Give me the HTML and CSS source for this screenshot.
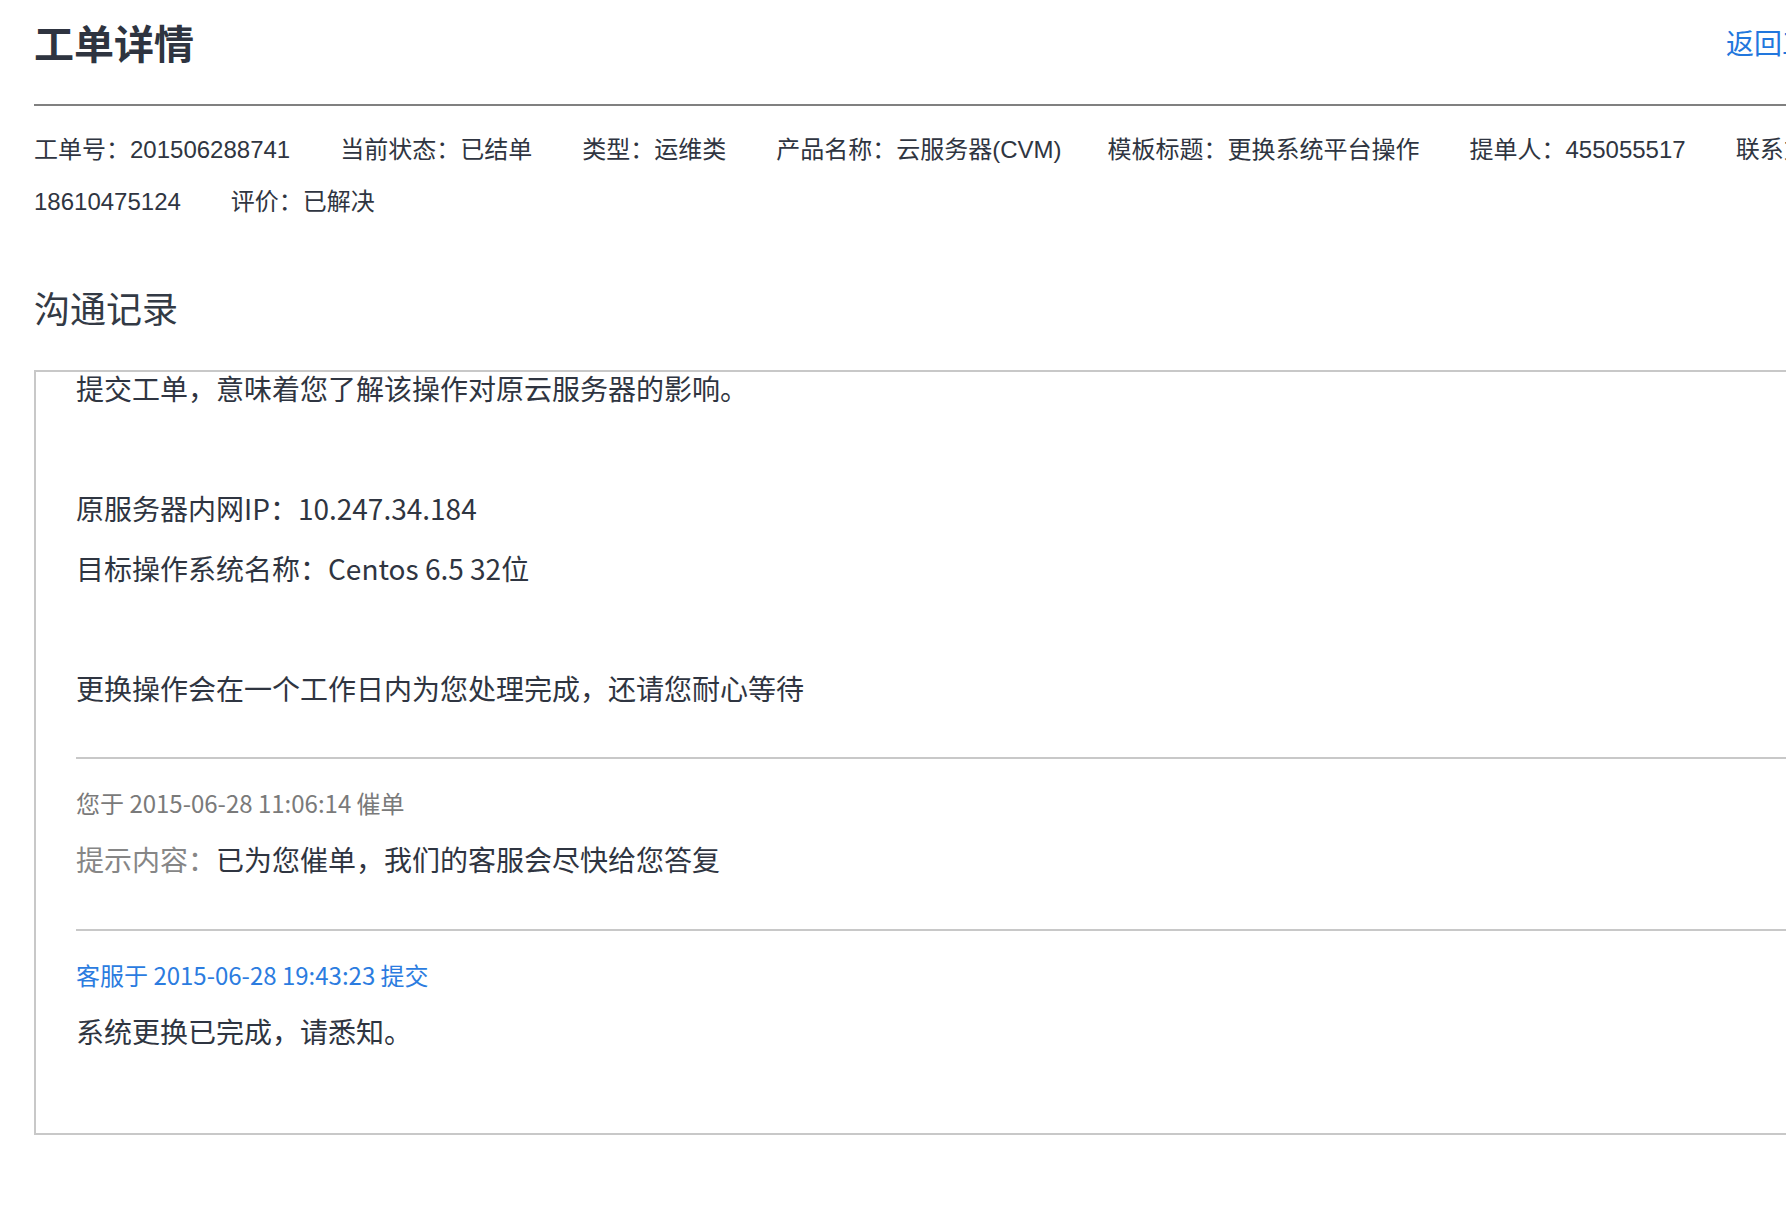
FILE: index.html
```html
<!DOCTYPE html>
<html lang="zh-CN">
<head>
<meta charset="utf-8">
<title>工单详情</title>
<link rel="stylesheet" href="styles.css">
</head>
<body>
<div class="page">
  <header class="page-header">
    <h1 class="page-title">工单详情</h1>
    <a class="back-link" href="#">返回工单列表</a>
  </header>

  <div class="ticket-info"><span class="info-item">工单号：201506288741</span><span class="info-item">当前状态：已结单</span><span class="info-item">类型：运维类</span><span class="info-item info-product">产品名称：云服务器(CVM)</span><span class="info-item">模板标题：更换系统平台操作</span><span class="info-item">提单人：455055517</span><span class="info-item">联系方式：<wbr>18610475124</span><span class="info-item">评价：已解决</span></div>

  <h2 class="section-title">沟通记录</h2>

  <div class="record-box">
    <div class="record-list">
      <div class="record record-first">
        <div class="record-body">提交工单，意味着您了解该操作对原云服务器的影响。<br><br>原服务器内网IP：10.247.34.184<br>目标操作系统名称：Centos 6.5 32位<br><br>更换操作会在一个工作日内为您处理完成，还请您耐心等待</div>
      </div>
      <div class="record">
        <div class="record-meta">您于 2015-06-28 11:06:14 催单</div>
        <div class="record-body"><span class="record-label">提示内容：</span>已为您催单，我们的客服会尽快给您答复</div>
      </div>
      <div class="record record-staff">
        <div class="record-meta">客服于 2015-06-28 19:43:23 提交</div>
        <div class="record-body">系统更换已完成，请悉知。</div>
      </div>
    </div>
  </div>
</div>
</body>
</html>
```

FILE: styles.css
```css
html, body {
  margin: 0;
  padding: 0;
  overflow: hidden;
  background: #ffffff;
}

body {
  font-family: "Liberation Sans", "Noto Sans CJK SC", sans-serif;
  color: #333a45;
}

.page {
  width: 1860px;
  padding-left: 34px;
}

.page-header {
  display: flex;
  align-items: center;
  justify-content: space-between;
  height: 83px;
  padding-bottom: 21px;
  border-bottom: 2px solid #808080;
}

.page-title {
  margin: 0;
  font-family: "Noto Sans CJK SC", sans-serif;
  font-size: 40px;
  font-weight: 700;
  line-height: 50px;
  color: #2e3440;
}

.back-link {
  font-family: "Noto Sans CJK SC", sans-serif;
  font-size: 28px;
  line-height: 40px;
  color: #2277dd;
  text-decoration: none;
}

.ticket-info {
  margin-top: 18px;
  font-size: 24px;
  line-height: 52px;
  color: #2f3541;
}

.info-item {
  margin-right: 50px;
}

.info-product {
  margin-right: 46px;
}

.section-title {
  margin: 54px 0 0;
  font-family: "Noto Sans CJK SC", sans-serif;
  font-size: 36px;
  font-weight: 400;
  line-height: 50px;
  color: #333a45;
}

.record-box {
  margin-top: 38px;
  border: 2px solid #c8c8c8;
  padding: 0 0 32px 40px;
  overflow: hidden;
  font-family: "Noto Sans CJK SC", sans-serif;
}

.record-list {
  margin-top: -14px;
}

.record {
  padding: 24px 0 40px;
  border-top: 2px solid #c8c8c8;
}

.record-first {
  padding-top: 0;
  padding-bottom: 39px;
  border-top: none;
}

.record-meta {
  font-size: 24px;
  line-height: 40px;
  color: #7a7a7a;
  margin-bottom: 6px;
}

.record-staff .record-meta {
  color: #2b7ce0;
}

.record-body {
  font-size: 28px;
  line-height: 60px;
  color: #2f3541;
}

.record-label {
  color: #868686;
}
```
